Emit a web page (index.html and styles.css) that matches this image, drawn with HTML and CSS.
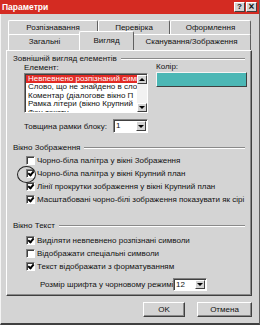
FILE: index.html
```html
<!DOCTYPE html>
<html lang="uk">
<head>
  <meta charset="UTF-8" />
  <title>Параметри</title>
  <link rel="stylesheet" href="styles.css">
</head>
<body>
  <div class="dialog">
    <div class="titlebar">
      <span class="title">Параметри</span>
      <span class="tbtns">
        <span class="tbtn">?</span>
        <span class="tbtn close">×</span>
      </span>
    </div>

    <div class="tabs">
      <div class="tab-row back">
        <div class="tab t-rozp">Розпізнавання</div>
        <div class="tab t-perev">Перевірка</div>
        <div class="tab t-oform">Оформлення</div>
      </div>
      <div class="tab-row front">
        <div class="tab t-zag">Загальні</div>
        <div class="tab t-vyg active">Вигляд</div>
        <div class="tab t-scan">Сканування/Зображення</div>
      </div>
    </div>

    <div class="panel">
      <!-- Зовнішній вигляд -->
      <div class="legend"><span>Зовнішній вигляд елементів</span></div>
      <div class="look">
        <div class="elem-col">
          <div class="lbl">Елемент:</div>
          <div class="listbox">
            <div class="items">
              <div class="item selected">Невпевнено розпізнаний симв</div>
              <div class="item">Слово, що не знайдено в сло</div>
              <div class="item">Коментар (діалогове вікно П</div>
              <div class="item">Рамка літери (вікно Крупний</div>
              <div class="item">Фон тексту</div>
            </div>
            <div class="vscroll">
              <span class="sbtn"><i class="arr up"></i></span>
              <span class="track"></span>
              <span class="sbtn"><i class="arr down"></i></span>
            </div>
          </div>
        </div>
        <div class="color-col">
          <div class="lbl">Колір:</div>
          <div class="swatch"></div>
        </div>
      </div>
      <div class="field-row thick">
        <span class="field-lbl">Товщина рамки блоку:</span>
        <span class="combo c-thick"><span class="val">1</span><span class="dd"><i class="arr down"></i></span></span>
      </div>

      <!-- Вікно Зображення -->
      <div class="legend g-img"><span>Вікно Зображення</span></div>
      <div class="checks first">
        <div class="check"><span class="box"></span>Чорно-біла палітра у вікні Зображення</div>
        <div class="check"><span class="box on"></span>Чорно-біла палітра у вікні Крупний план</div>
        <div class="check"><span class="box on"></span>Лінії прокрутки зображення у вікні Крупний план</div>
        <div class="check"><span class="box on"></span>Масштабовані чорно-білі зображення показувати як сірі</div>
        <span class="mark"></span>
      </div>

      <!-- Вікно Текст -->
      <div class="legend g-text"><span>Вікно Текст</span></div>
      <div class="checks second">
        <div class="check"><span class="box on"></span>Виділяти невпевнено розпізнані символи</div>
        <div class="check"><span class="box"></span>Відображати спеціальні символи</div>
        <div class="check"><span class="box on"></span>Текст відображати з форматуванням</div>
      </div>
      <div class="field-row fsize">
        <span class="field-lbl">Розмір шрифта у чорновому режимі</span>
        <span class="combo c-size"><span class="val">12</span><span class="dd"><i class="arr down"></i></span></span>
      </div>
    </div>

    <div class="buttons">
      <span class="btn ok">OK</span>
      <span class="btn cancel">Отмена</span>
    </div>
  </div>
</body>
</html>
```

FILE: styles.css
```css
* {
  box-sizing: border-box;
}

body {
  margin: 0;
  background: #d4d4d4;
  font-family: 'Liberation Sans', Arial, sans-serif;
  font-size: 8px;
  color: #111;
}

.dialog {
  position: relative;
  width: 260px;
  height: 325px;
  background: #d4d4d4;
  border-bottom: 2px solid #404040;
  border-right: 1px solid #606060;
  border-left: 1px solid #f4f4f4;
}

/* title bar */
.titlebar {
  height: 14px;
  background: #d42b22;
  display: flex;
  align-items: center;
  justify-content: space-between;
  padding: 0 2px 0 2px;
  margin-left: -1px;
}

.title {
  color: #fff;
  font-weight: bold;
  font-size: 8.5px;
}

.tbtns {
  display: flex;
  gap: 1px;
}

.tbtn {
  width: 11px;
  height: 10px;
  background: #d4d4d4;
  border: 1px solid;
  border-color: #fff #404040 #404040 #fff;
  font-size: 8px;
  font-weight: bold;
  line-height: 8px;
  text-align: center;
}

.tbtn.close {
  font-size: 10px;
}

/* tabs */
.tabs {
  margin-top: 6px;
  padding-left: 7px;
}

.tab-row {
  display: flex;
}

.tab {
  height: 16px;
  line-height: 14px;
  text-align: center;
  border: 1px solid;
  border-bottom: none;
  border-color: #fff #606060 #606060 #fff;
  border-radius: 2px 2px 0 0;
  background: #d4d4d4;
  white-space: nowrap;
}

.front {
  margin-top: -2px;
  position: relative;
}

.tab.active {
  height: 19px;
  margin: -3px -2px 0 -2px;
  padding-top: 2px;
  position: relative;
  z-index: 2;
}

.t-rozp { width: 90px; }
.t-perev { width: 72px; }
.t-oform { width: 81px; }
.t-zag { width: 73px; }
.t-vyg { width: 55px; }
.t-scan { width: 119px; }

/* panel */
.panel {
  position: relative;
  margin-left: 5px;
  width: 246px;
  height: 246px;
  border: 1px solid;
  border-color: #fff #404040 #404040 #fff;
  box-shadow: inset -1px -1px 0 #8a8a8a;
  padding: 3px 6px 0 6px;
}

.legend {
  display: flex;
  align-items: center;
  height: 9px;
  line-height: 9px;
  white-space: nowrap;
}

.legend::after {
  content: "";
  flex: 1;
  margin-left: 4px;
  border-top: 1px solid #8a8a8a;
  border-bottom: 1px solid #fff;
}

.look {
  display: flex;
  padding-left: 11px;
}

.lbl {
  height: 10px;
  line-height: 10px;
}

.elem-col {
  width: 124px;
}

.color-col {
  margin-left: 8px;
  margin-top: -1px;
}

.listbox {
  display: flex;
  height: 40px;
  background: #fff;
  border: 1px solid;
  border-color: #808080 #fff #fff #808080;
  box-shadow: inset 1px 1px 0 #404040;
  overflow: hidden;
}

.items {
  flex: 1;
  overflow: hidden;
  padding: 1px 0 0 1px;
}

.item {
  height: 8.4px;
  line-height: 8.4px;
  white-space: nowrap;
  padding-left: 2px;
}

.item.selected {
  background: #e22a24;
  color: #fff;
}

.vscroll {
  width: 10px;
  display: flex;
  flex-direction: column;
  background: #f2f2f2;
  margin-top: 1px;
}

.vscroll .track {
  flex: 1;
}

.sbtn {
  height: 9px;
  background: #d4d4d4;
  border: 1px solid;
  border-color: #fff #404040 #404040 #fff;
  display: flex;
  align-items: center;
  justify-content: center;
}

.arr {
  width: 0;
  height: 0;
  border-left: 3px solid transparent;
  border-right: 3px solid transparent;
}

.arr.up {
  border-bottom: 3px solid #000;
}

.arr.down {
  border-top: 3px solid #000;
}

.swatch {
  width: 91px;
  height: 15px;
  background: #4cb7b5;
  border: 1px solid;
  border-color: #f4f4f4 #404040 #404040 #f4f4f4;
}

/* rows with combo boxes */
.field-row {
  display: flex;
  align-items: center;
  white-space: nowrap;
}

.thick {
  margin-top: 6px;
  padding-left: 11px;
  height: 14px;
}

.thick .field-lbl {
  width: 89px;
}

.fsize {
  margin-top: 5px;
  padding-left: 27px;
  height: 13px;
}

.fsize .field-lbl {
  width: 133px;
}

.combo {
  display: flex;
  height: 100%;
  background: #fff;
  border: 1px solid;
  border-color: #808080 #fff #fff #808080;
  box-shadow: inset 1px 1px 0 #404040;
  padding: 1px 1px 1px 2px;
}

.c-thick { width: 35px; }
.c-size { width: 34px; }

.combo .val {
  flex: 1;
  line-height: 10px;
}

.combo .dd {
  width: 10px;
  background: #d4d4d4;
  border: 1px solid;
  border-color: #fff #404040 #404040 #fff;
  display: flex;
  align-items: center;
  justify-content: center;
}

/* check boxes */
.g-img {
  margin-top: 10px;
}

.g-text {
  margin-top: 15px;
}

.checks {
  position: relative;
  padding-left: 13px;
}

.checks.first {
  margin-top: 2px;
}

.checks.second {
  margin-top: 4px;
}

.check {
  display: flex;
  align-items: center;
  height: 13px;
  white-space: nowrap;
}

.box {
  position: relative;
  width: 9px;
  height: 9px;
  margin-right: 2px;
  background: #fff;
  border: 1px solid;
  border-color: #808080 #fff #fff #808080;
  box-shadow: inset 1px 1px 0 #404040;
}

.box.on::after {
  content: "";
  position: absolute;
  left: 2px;
  top: 0;
  width: 2px;
  height: 4px;
  border: solid #000;
  border-width: 0 2px 2px 0;
  transform: rotate(40deg);
}

.mark {
  position: absolute;
  left: 4px;
  top: 12px;
  width: 19px;
  height: 17px;
  border: 1px solid #222;
  border-radius: 50%;
}

/* bottom buttons */
.buttons {
  display: flex;
  justify-content: flex-end;
  gap: 12px;
  margin-top: 6px;
  padding-right: 7px;
}

.btn {
  height: 15px;
  line-height: 13px;
  text-align: center;
  background: #d4d4d4;
  border: 1px solid;
  border-color: #fff #404040 #404040 #fff;
  box-shadow: inset -1px -1px 0 #8a8a8a;
}

.btn.ok { width: 42px; }
.btn.cancel { width: 55px; }
```
